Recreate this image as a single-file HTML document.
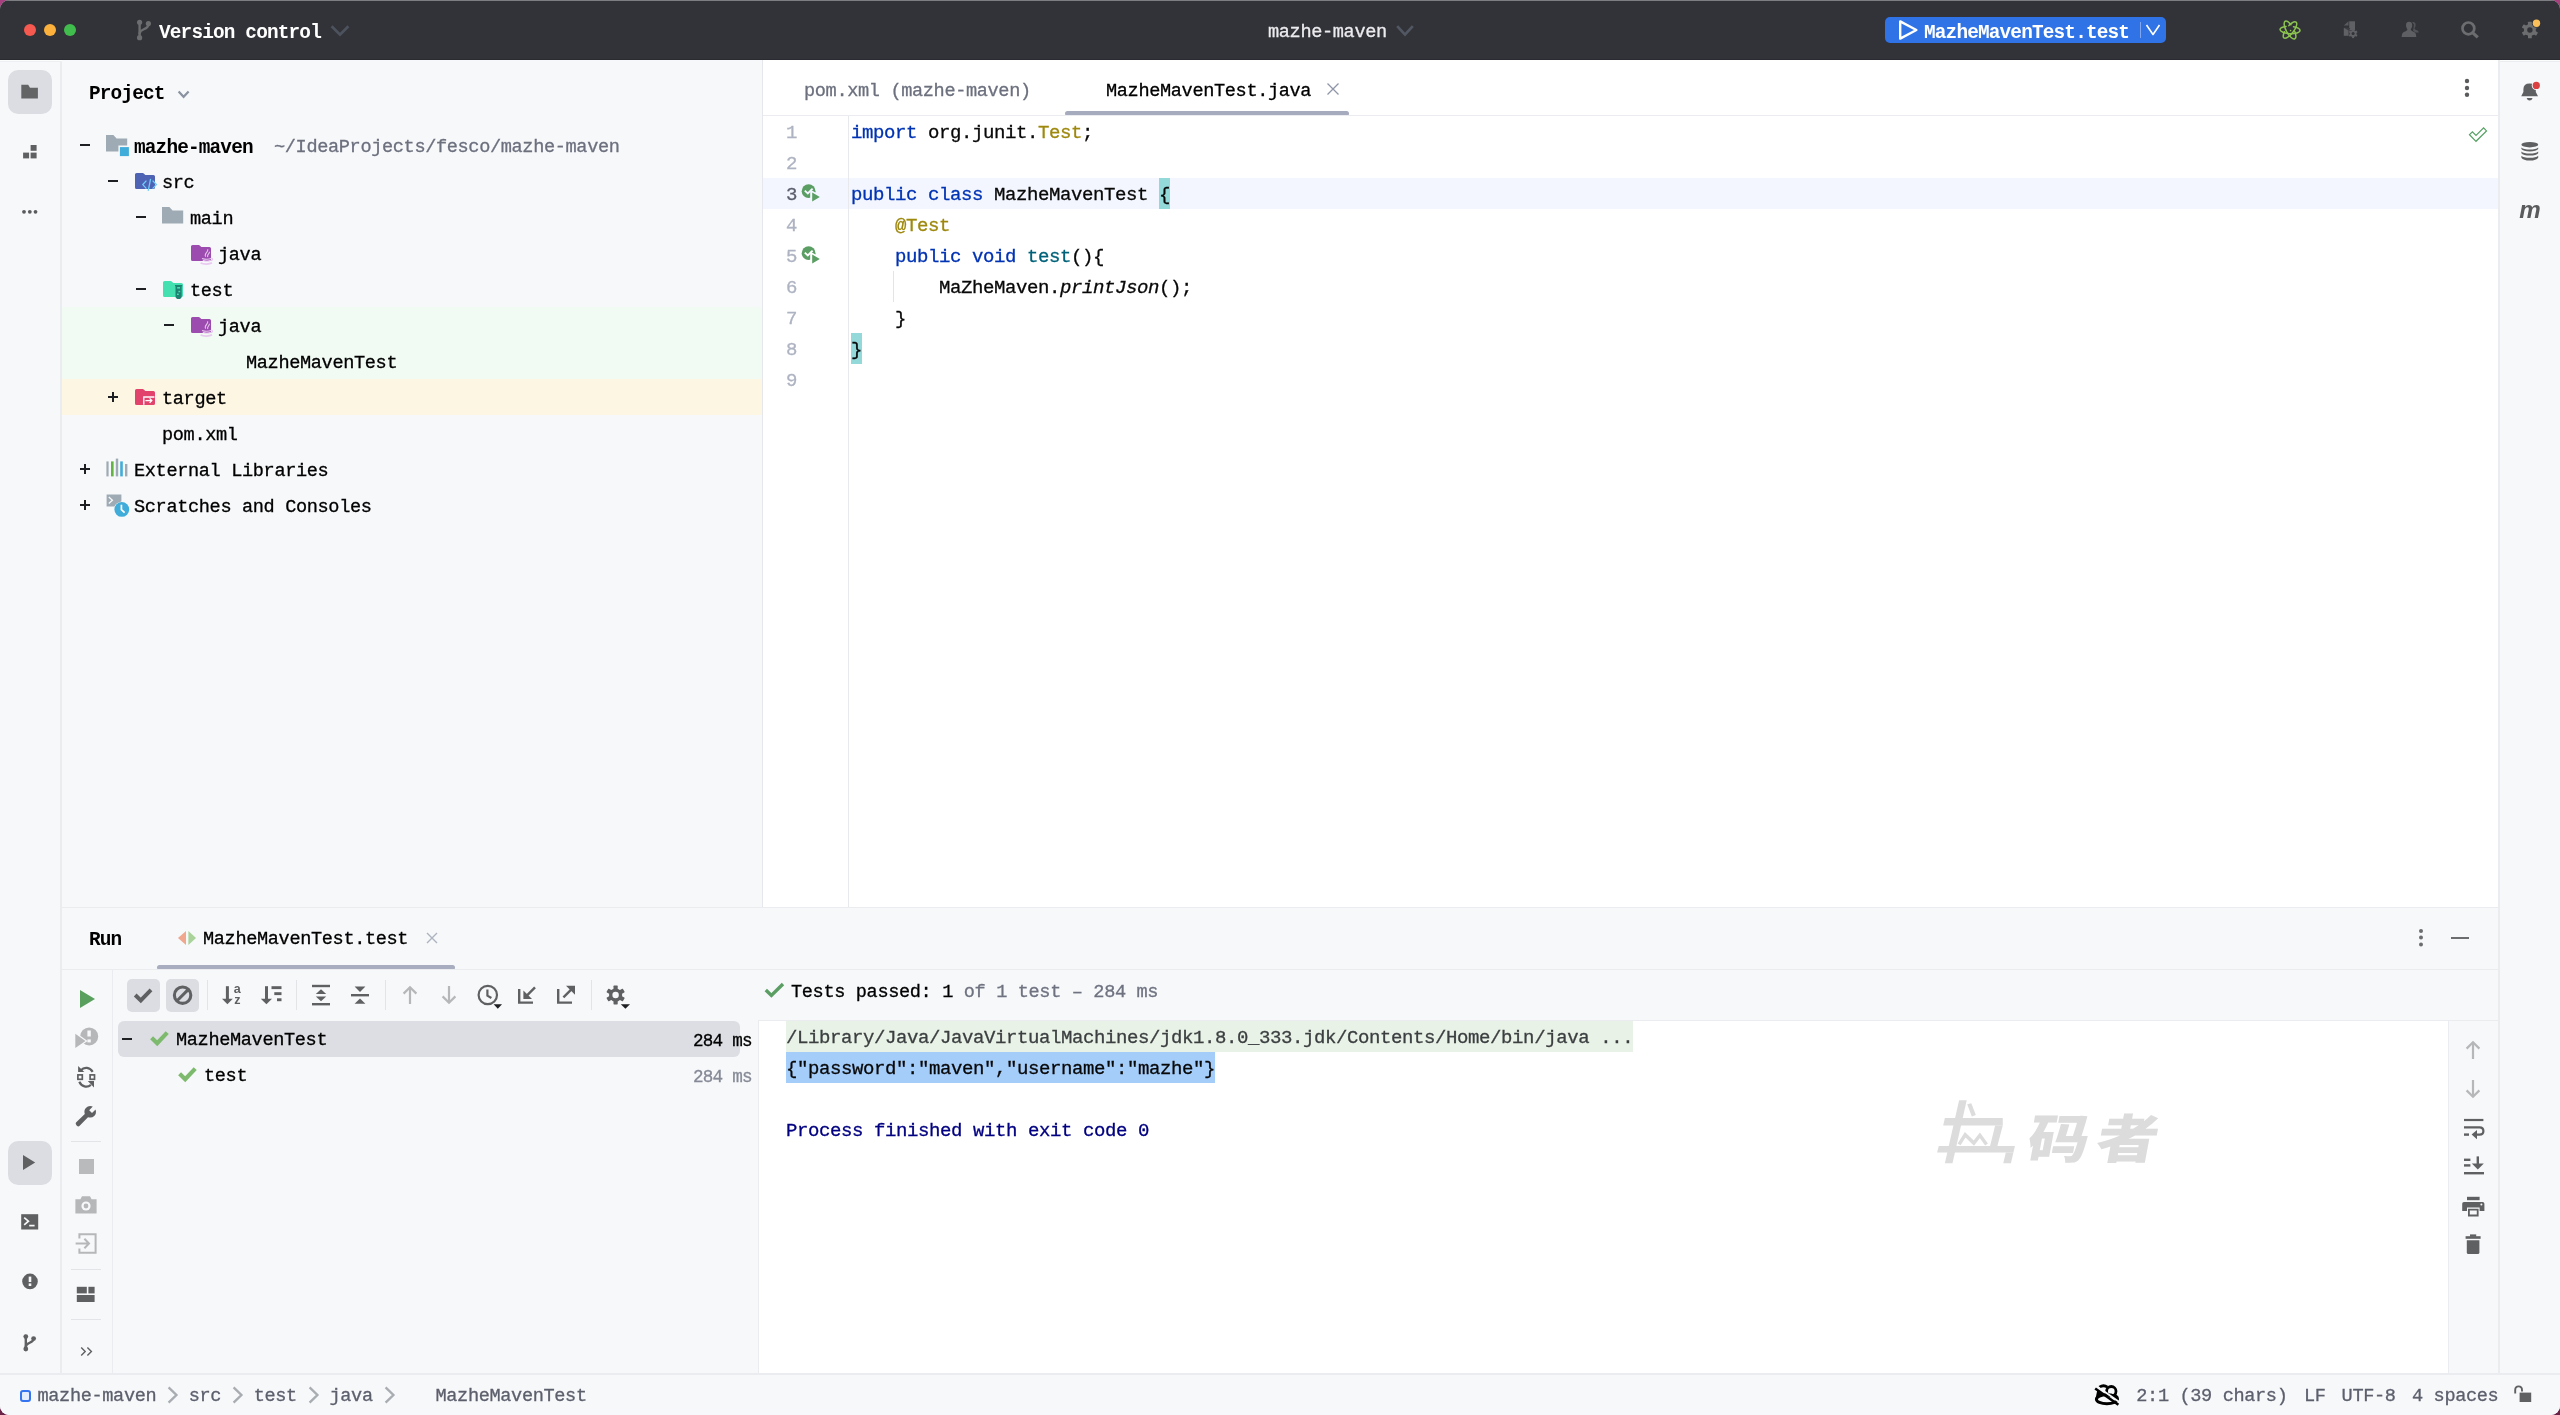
<!DOCTYPE html>
<html lang="en">
<head>
<meta charset="utf-8">
<title>mazhe-maven – MazheMavenTest.java</title>
<style>
html,body{margin:0;padding:0;}
body{width:2560px;height:1415px;overflow:hidden;background:linear-gradient(#a8407f,#6a2247);position:relative;
  font-family:"Liberation Mono","DejaVu Sans Mono",monospace;}
#win{position:absolute;left:0;top:0;width:2560px;height:1415px;border-radius:9px;overflow:hidden;background:#f7f8fa;will-change:transform;}
.abs{position:absolute;}
.t{position:absolute;white-space:pre;font-size:18.6px;letter-spacing:-0.36px;line-height:24px;height:24px;color:#000;margin-top:2px;-webkit-text-stroke:0.3px;}
.b{font-weight:bold;-webkit-text-stroke:0;font-size:19.4px;letter-spacing:-0.84px;}
.g{color:#6c707e;}
.c{position:absolute;white-space:pre;font-size:19px;letter-spacing:-0.4px;line-height:31px;height:31px;color:#080808;margin-top:2px;-webkit-text-stroke:0.3px;}
svg{position:absolute;overflow:visible;}
/* title bar */
#title{left:0;top:0;width:2560px;height:60px;background:#323338;}
#title .topline{left:0;top:0;width:2560px;height:1px;background:#7d7e82;}
.dot{position:absolute;top:24px;width:12px;height:12px;border-radius:50%;}
/* stripes */
#lstripe{left:0;top:60px;width:62px;height:1314px;background:#f7f8fa;box-shadow:inset -2px 0 0 #ebecf0;}
#rstripe{left:2498px;top:60px;width:62px;height:1314px;background:#f7f8fa;}
.sel{position:absolute;width:44px;height:44px;border-radius:10px;background:#dbdde2;}
/* project */
#proj{left:62px;top:60px;width:700px;height:848px;background:#f7f8fa;}
.row{position:absolute;left:0;width:700px;height:36px;}
/* editor */
#editor{left:762px;top:60px;width:1736px;height:848px;background:#fff;}
/* bottom */
#bottom{left:62px;top:908px;width:2436px;height:466px;background:#f7f8fa;}
/* status */
#status{left:0;top:1374px;width:2560px;height:41px;background:#f7f8fa;}
</style>
</head>
<body>
<div id="win">

<!-- ================= TITLE BAR ================= -->
<div id="title" class="abs">
  <div class="topline abs"></div>
  <div class="abs" style="left:0;top:58.6px;width:2560px;height:1.4px;background:#2a2b30"></div>
  <div class="dot" style="left:24px;background:#f6594f"></div>
  <div class="dot" style="left:44px;background:#fbb13c"></div>
  <div class="dot" style="left:64px;background:#41bd4e"></div>
  <!-- branch icon -->
  <svg style="left:135px;top:18px" width="20" height="24" viewBox="0 0 20 24"><g fill="none" stroke="#6c6d6f" stroke-width="2.4" stroke-linecap="round"><path d="M4.6 4.5V19.5"/><path d="M13.4 6.5C13.4 12 4.6 10.5 4.6 15.5"/></g><g fill="#6c6d6f"><circle cx="4.6" cy="4.3" r="2.6"/><circle cx="4.6" cy="19.7" r="2.6"/><circle cx="13.4" cy="5.6" r="2.6"/></g></svg>
  <div class="t b" style="left:159px;top:19px;color:#fff">Version control</div>
  <svg style="left:330px;top:24px" width="20" height="13" viewBox="0 0 20 13"><path d="M1.6 2.2L10 10.6L18.4 2.2" fill="none" stroke="#4d535e" stroke-width="2.7"/></svg>
  <div class="t" style="left:1268px;top:19px;color:#ececef">mazhe-maven</div>
  <svg style="left:1396px;top:24px" width="18" height="13" viewBox="0 0 18 13"><path d="M1.2 2.2L9 10.6L16.8 2.2" fill="none" stroke="#525863" stroke-width="2.7"/></svg>
  <!-- run widget -->
  <div class="abs" style="left:1885px;top:17px;width:281px;height:26px;border-radius:5px;background:#3073e6"></div>
  <svg style="left:1897px;top:19px" width="22" height="22" viewBox="0 0 22 22"><path d="M3.2 2.4L19.4 11L3.2 19.6Z" fill="none" stroke="#fff" stroke-width="2.4" stroke-linejoin="round"/></svg>
  <div class="t b" style="left:1924px;top:19px;color:#fff">MazheMavenTest.test</div>
  <div class="abs" style="left:2140px;top:22px;width:1px;height:16px;background:#7fa6f0"></div>
  <svg style="left:2145px;top:23px" width="16" height="14" viewBox="0 0 16 14"><path d="M1.5 2L8 11.5L14.5 2" fill="none" stroke="#fff" stroke-width="1.6" stroke-linejoin="round"/></svg>
  <!-- atom icon -->
  <svg style="left:2279px;top:20px" width="22" height="20" viewBox="0 0 22 20"><g fill="none" stroke="#8dc451" stroke-width="1.5" stroke-linecap="round"><ellipse cx="11" cy="10" rx="10" ry="3.7" transform="rotate(2.6 11 10)" stroke-dasharray="38 7.3" stroke-dashoffset="-37"/><ellipse cx="11" cy="10" rx="10" ry="3.7" transform="rotate(61 11 10)" stroke-dasharray="38 7.3" stroke-dashoffset="-37"/><ellipse cx="11" cy="10" rx="10" ry="3.7" transform="rotate(127.5 11 10)" stroke-dasharray="38 7.3" stroke-dashoffset="-14"/></g><circle cx="11" cy="10" r="2.4" fill="#323338"/><circle cx="11.6" cy="10.6" r=".8" fill="#8dc451"/></svg>
  <!-- file gear icon -->
  <svg style="left:2342px;top:21px" width="17" height="18" viewBox="0 0 17 18"><g fill="#606165"><path d="M7.2 0.3H13V9.4H7.2Z"/><path d="M1.8 4.6L6.5 0.3V4.6Z" opacity=".85"/><path d="M1.8 6.9H6.6V14.8H1.8Z"/><path d="M2.2 6.9H8.4L6.6 9.6Z" fill="#3c3d42"/></g><g transform="translate(11.1 12.6)"><g fill="#606165"><circle r="3.4"/><rect x="-1" y="-4.5" width="2" height="9"/><rect x="-1" y="-4.5" width="2" height="9" transform="rotate(60)"/><rect x="-1" y="-4.5" width="2" height="9" transform="rotate(120)"/></g><circle r="1.5" fill="#323338"/></g></svg>
  <!-- people icon -->
  <svg style="left:2401px;top:21px" width="19" height="17" viewBox="0 0 19 17"><g fill="#5e5f63"><path d="M11.2 1.2C13.2 0.6 14.8 2 14.6 4.2C14.5 5.6 13.9 6.6 13.4 7.3C13.4 8.6 15.5 9.2 17 9.8L17.8 11.4H14.2L12 9.6L12.6 7L12.9 3.4Z" opacity=".75"/><path d="M5 4.2C5 1.8 6.5 0.8 8.1 0.8C9.8 0.8 11.2 1.8 11.2 4.2C11.2 6 10.5 7.3 9.8 8.2C9.8 10.4 13.6 10.2 14.8 12.8L15.3 16H0.6L1.2 12.8C2.4 10.2 6.4 10.4 6.4 8.2C5.7 7.3 5 6 5 4.2Z"/></g></svg>
  <!-- search -->
  <svg style="left:2458px;top:18px" width="24" height="24" viewBox="0 0 24 24"><g fill="none" stroke="#6c6d6f"><circle cx="10.4" cy="10.4" r="5.9" stroke-width="2.7"/><path d="M14.8 14.8L19.8 19.4" stroke-width="3.1"/></g></svg>
  <!-- gear with dot -->
  <svg style="left:2518px;top:18px" width="26" height="26" viewBox="0 0 26 26"><g transform="translate(11.9 12)"><g fill="#6c6d6f"><circle r="6"/><rect x="-1.9" y="-8.3" width="3.8" height="16.6" rx=".6"/><rect x="-1.9" y="-8.3" width="3.8" height="16.6" rx=".6" transform="rotate(60)"/><rect x="-1.9" y="-8.3" width="3.8" height="16.6" rx=".6" transform="rotate(120)"/></g><circle r="2.7" fill="#323338"/></g><circle cx="18.5" cy="5.3" r="4.5" fill="#323338"/><circle cx="18.5" cy="5.3" r="3.7" fill="#fbbf5a"/></svg>
</div>

<!-- ================= LEFT STRIPE ================= -->
<div id="lstripe" class="abs">
  <div class="abs" style="left:0;top:0;width:762px;height:1px;background:#fcfcfd"></div>
  <div class="abs" style="left:0;top:1px;width:62px;height:1px;background:#eeeff2"></div>
  <div class="sel" style="left:8px;top:10px"></div>
  <svg style="left:21px;top:24px" width="18" height="16" viewBox="0 0 18 16"><path d="M0.3 0.8H7.2L9 3.8H16.9V14.6H0.3Z" fill="#636466"/></svg>
  <svg style="left:22px;top:84px" width="16" height="16" viewBox="0 0 16 16"><g fill="#5f6062"><rect x="8.6" y="1" width="6" height="5.8"/><rect x="1.1" y="8.6" width="6" height="5.8"/><rect x="8.6" y="8.6" width="6" height="5.8"/></g></svg>
  <svg style="left:20px;top:146px" width="20" height="12" viewBox="0 0 20 12"><g fill="#5a5b5d"><circle cx="4" cy="5.8" r="1.9"/><circle cx="9.8" cy="5.8" r="1.9"/><circle cx="15.5" cy="5.8" r="1.9"/></g></svg>
  <div class="sel" style="left:8px;top:1081px"></div>
  <svg style="left:22px;top:1094px" width="16" height="18" viewBox="0 0 16 18"><path d="M1 1L13.2 8.5L1 16Z" fill="#5f6062"/></svg>
  <svg style="left:21px;top:1154px" width="18" height="16" viewBox="0 0 18 16"><rect x="0.2" y="0.2" width="17" height="15.3" fill="#5f6062"/><path d="M3.2 3.6L7.4 7.2L3.2 10.8" fill="none" stroke="#f7f8fa" stroke-width="1.7"/><path d="M8.2 11.6H13.6" stroke="#f7f8fa" stroke-width="1.7"/></svg>
  <svg style="left:22px;top:1213px" width="16" height="16" viewBox="0 0 16 16"><circle cx="8" cy="8.4" r="7.8" fill="#5f6062"/><rect x="6.7" y="3.6" width="2.6" height="5.4" fill="#f7f8fa"/><rect x="6.7" y="10.4" width="2.6" height="2.6" fill="#f7f8fa"/></svg>
  <svg style="left:21px;top:1273px" width="18" height="20" viewBox="0 0 18 20"><g fill="none" stroke="#5f6062" stroke-width="2.4" stroke-linecap="round"><path d="M4.8 3V16"/><path d="M12.6 5.5C12.6 10.5 4.8 9 4.8 14"/></g><g fill="#5f6062"><circle cx="4.8" cy="3.6" r="2.4"/><circle cx="4.8" cy="16" r="2.4"/><circle cx="12.6" cy="5.6" r="2.4"/></g></svg>
</div>

<!-- ================= PROJECT PANEL ================= -->
<div id="proj" class="abs">
<!--PROJ-START-->
  <div class="t b" style="left:27px;top:20px">Project</div>
  <svg style="left:114px;top:30px" width="14" height="10" viewBox="0 0 14 10"><path d="M2.6 1.6L7.6 6.8L12.6 1.6" fill="none" stroke="#8a93a0" stroke-width="2.2"/></svg>
  <div class="abs" style="left:0;top:247px;width:700px;height:72px;background:#f1faf3"></div>
  <div class="abs" style="left:0;top:319px;width:700px;height:36px;background:#fdf6e2"></div>
  <div class="abs" style="left:18px;top:84px;width:10px;height:2px;background:#1e1f22"></div>
  <svg style="left:44px;top:75px" width="24" height="22" viewBox="0 0 24 22"><path d="M0 0H7.4L10.6 3.4H21.2V10.6H12.4V16.4H0Z" fill="#9eabb4"/><rect x="13.9" y="12.1" width="9" height="9" fill="#40acd9"/></svg>
  <div class="t b" style="left:72px;top:74px">mazhe-maven</div>
  <div class="t g" style="left:212px;top:74px">~/IdeaProjects/fesco/mazhe-maven</div>
  <div class="abs" style="left:46px;top:120px;width:10px;height:2px;background:#1e1f22"></div>
  <svg style="left:73px;top:113px" width="24" height="20" viewBox="0 0 24 20"><path d="M0 1.6Q0 0 1.6 0H7.6Q8.3 0 8.8 .5L10.3 2H18.4Q20 2 20 3.6V14.4Q20 16 18.4 16H1.6Q0 16 0 14.4Z" fill="#4e63b3"/><g fill="none" stroke="#6fccfb" stroke-width="1.3"><path d="M11.4 7.6L7.8 11.6L11.4 15.6"/><path d="M15.6 5.8L13.2 17.8"/><path d="M17.6 7.6L21.4 11.6L17.6 15.6"/></g></svg>
  <div class="t" style="left:100px;top:110px">src</div>
  <div class="abs" style="left:74px;top:156px;width:10px;height:2px;background:#1e1f22"></div>
  <svg style="left:100px;top:147px" width="24" height="20" viewBox="0 0 24 20"><path d="M0 0H7.4L10.6 3.4H21.2V16.4H0Z" fill="#9eabb4"/></svg>
  <div class="t" style="left:128px;top:146px">main</div>
  <svg style="left:129px;top:185px" width="24" height="22" viewBox="0 0 24 22"><path d="M0 1.6Q0 0 1.6 0H7.6Q8.3 0 8.8 .5L10.3 2H18.4Q20 2 20 3.6V14.4Q20 16 18.4 16H1.6Q0 16 0 14.4Z" fill="#9b4cae"/><g fill="none" stroke="#e6c3ee" stroke-width="1.1"><path d="M16.6 4.2C18 6.6 12.6 8.4 14.6 11.6"/><path d="M18.3 6.8C19 8.6 15.6 9.6 16.8 12"/><path d="M11 13.4C14 14.4 18 14.4 20.4 13.2"/><path d="M11.8 15.2C14.4 16.2 17.4 16.2 19.8 15.2"/><path d="M9.6 18C12.6 19.4 18.4 19.4 21 17.8" stroke-width="1.8" stroke="#e9c9f0"/><path d="M20.4 13.2C22 13.2 22 15.4 20 15.6"/></g></svg>
  <div class="t" style="left:156px;top:182px">java</div>
  <div class="abs" style="left:74px;top:228px;width:10px;height:2px;background:#1e1f22"></div>
  <svg style="left:101px;top:221px" width="24" height="22" viewBox="0 0 24 22"><path d="M0 1.6Q0 0 1.6 0H7.6Q8.3 0 8.8 .5L10.3 2H18.4Q20 2 20 3.6V14.4Q20 16 18.4 16H1.6Q0 16 0 14.4Z" fill="#45e0b0"/><path d="M12 4H19.2V5.2H18.7V15.2Q18.7 18 15.6 18Q12.5 18 12.5 15.2V5.2H12Z" fill="#1e8273"/><g fill="#45e0b0"><rect x="14.2" y="6" width="2.8" height="1.6"/><rect x="15.4" y="9.8" width="1.8" height="1.4"/><rect x="14" y="12.6" width="1.8" height="1.4"/></g></svg>
  <div class="t" style="left:128px;top:218px">test</div>
  <div class="abs" style="left:102px;top:264px;width:10px;height:2px;background:#1e1f22"></div>
  <svg style="left:129px;top:257px" width="24" height="22" viewBox="0 0 24 22"><path d="M0 1.6Q0 0 1.6 0H7.6Q8.3 0 8.8 .5L10.3 2H18.4Q20 2 20 3.6V14.4Q20 16 18.4 16H1.6Q0 16 0 14.4Z" fill="#9b4cae"/><g fill="none" stroke="#e6c3ee" stroke-width="1.1"><path d="M16.6 4.2C18 6.6 12.6 8.4 14.6 11.6"/><path d="M18.3 6.8C19 8.6 15.6 9.6 16.8 12"/><path d="M11 13.4C14 14.4 18 14.4 20.4 13.2"/><path d="M11.8 15.2C14.4 16.2 17.4 16.2 19.8 15.2"/><path d="M9.6 18C12.6 19.4 18.4 19.4 21 17.8" stroke-width="1.8" stroke="#e9c9f0"/><path d="M20.4 13.2C22 13.2 22 15.4 20 15.6"/></g></svg>
  <div class="t" style="left:156px;top:254px">java</div>
  <div class="t" style="left:184px;top:290px">MazheMavenTest</div>
  <div class="abs" style="left:46px;top:336px;width:10px;height:2px;background:#1e1f22"></div>
  <div class="abs" style="left:50px;top:332px;width:2px;height:10px;background:#1e1f22"></div>
  <svg style="left:73px;top:329px" width="24" height="20" viewBox="0 0 24 20"><path d="M0 1.6Q0 0 1.6 0H7.6Q8.3 0 8.8 .5L10.3 2H18.4Q20 2 20 3.6V14.4Q20 16 18.4 16H1.6Q0 16 0 14.4Z" fill="#e2436d"/><g fill="none" stroke="#fff" stroke-width="1.3"><path d="M8.8 15.8V8H19.4"/><path d="M10.4 11.6H16.6"/><path d="M14.6 9.4L16.8 11.6L14.6 13.8"/></g></svg>
  <div class="t" style="left:100px;top:326px">target</div>
  <div class="t" style="left:100px;top:362px">pom.xml</div>
  <div class="abs" style="left:18px;top:408px;width:10px;height:2px;background:#1e1f22"></div>
  <div class="abs" style="left:22px;top:404px;width:2px;height:10px;background:#1e1f22"></div>
  <svg style="left:44px;top:398px" width="24" height="20" viewBox="0 0 24 20"><g><rect x="0.4" y="3.4" width="2.2" height="15" fill="#9eabb4"/><rect x="5" y="3.4" width="2.6" height="15" fill="#62b543"/><rect x="9.8" y="0.6" width="2.4" height="17.8" fill="#9eabb4"/><rect x="14.2" y="3.4" width="2.6" height="15" fill="#40acd9"/><rect x="19" y="6" width="2.4" height="12.4" fill="#9eabb4"/></g></svg>
  <div class="t" style="left:72px;top:398px">External Libraries</div>
  <div class="abs" style="left:18px;top:444px;width:10px;height:2px;background:#1e1f22"></div>
  <div class="abs" style="left:22px;top:440px;width:2px;height:10px;background:#1e1f22"></div>
  <svg style="left:44px;top:434px" width="26" height="26" viewBox="0 0 26 26"><path d="M0.6 0.4H15.4V7.6Q10.4 8.6 8.4 12.4H0.6Z" fill="#9eabb4"/><path d="M2.8 3L6.4 6.2L2.8 9.4" fill="none" stroke="#f7f8fa" stroke-width="1.3"/><circle cx="15.8" cy="15.4" r="7.4" fill="#40acd9"/><path d="M15.4 10.8V15.6L18.6 18.6" fill="none" stroke="#fff" stroke-width="1.7"/></svg>
  <div class="t" style="left:72px;top:434px">Scratches and Consoles</div>
<!--PROJ-END-->
</div>

<!-- ================= EDITOR ================= -->
<div id="editor" class="abs">
<!--EDITOR-START-->
  <div class="t g" style="left:42px;top:18px">pom.xml (mazhe-maven)</div>
  <div class="t" style="left:344px;top:18px">MazheMavenTest.java</div>
  <svg style="left:564px;top:22px" width="14" height="14" viewBox="0 0 14 14"><path d="M1.5 1.5L12.5 12.5M12.5 1.5L1.5 12.5" stroke="#9096a9" stroke-width="1.3" fill="none"/></svg>
  <div class="abs" style="left:303px;top:51px;width:284px;height:5px;border-radius:2.5px;background:#a6abbd"></div>
  <div class="abs" style="left:0;top:55px;width:1736px;height:1px;background:#ebecf0"></div>
  <svg style="left:1701px;top:18px" width="8" height="22" viewBox="0 0 8 22"><g fill="#5a5b5d"><circle cx="4" cy="3" r="2.2"/><circle cx="4" cy="10" r="2.2"/><circle cx="4" cy="16.7" r="2.2"/></g></svg>
  <div class="abs" style="left:0;top:0;width:1.4px;height:848px;background:#e6e7ec"></div>
  <div class="abs" style="left:1px;top:118px;width:1735px;height:31px;background:#f3f6fe"></div>
  <div class="abs" style="left:86px;top:56px;width:1px;height:792px;background:#e8e9ed"></div>
  <div class="abs" style="left:131px;top:211px;width:1px;height:31px;background:#e4e4e6"></div>
  <div class="abs" style="left:397px;top:118px;width:11px;height:31px;background:#93d9d9"></div>
  <div class="abs" style="left:89px;top:273px;width:11px;height:31px;background:#93d9d9"></div>
  <div class="c" style="left:24px;top:56px;color:#aeb3c2">1</div>
  <div class="c" style="left:89px;top:56px"><span style="color:#0033b3">import</span> org.junit.<span style="color:#9e880d">Test</span>;</div>
  <div class="c" style="left:24px;top:87px;color:#aeb3c2">2</div>
  <div class="c" style="left:24px;top:118px;color:#5a5d6b">3</div>
  <div class="c" style="left:89px;top:118px"><span style="color:#0033b3">public</span> <span style="color:#0033b3">class</span> MazheMavenTest {</div>
  <div class="c" style="left:24px;top:149px;color:#aeb3c2">4</div>
  <div class="c" style="left:89px;top:149px">    <span style="color:#9e880d">@Test</span></div>
  <div class="c" style="left:24px;top:180px;color:#aeb3c2">5</div>
  <div class="c" style="left:89px;top:180px">    <span style="color:#0033b3">public</span> <span style="color:#0033b3">void</span> <span style="color:#00627a">test</span>(){</div>
  <div class="c" style="left:24px;top:211px;color:#aeb3c2">6</div>
  <div class="c" style="left:89px;top:211px">        MaZheMaven.<i>printJson</i>();</div>
  <div class="c" style="left:24px;top:242px;color:#aeb3c2">7</div>
  <div class="c" style="left:89px;top:242px">    }</div>
  <div class="c" style="left:24px;top:273px;color:#aeb3c2">8</div>
  <div class="c" style="left:89px;top:273px">}</div>
  <div class="c" style="left:24px;top:304px;color:#aeb3c2">9</div>
  <svg style="left:39px;top:124px" width="22" height="20" viewBox="0 0 22 20"><circle cx="7.6" cy="7.2" r="6.9" fill="#5a9e63"/><path d="M9.2 5.4L21 12.3L9.2 19.4Z" fill="#f3f6fe"/><path d="M11.2 8.6L18.8 12.9L11.2 17.4Z" fill="#5a9e63"/><path d="M3.8 6.6L6.8 9.4L11.6 4.6" fill="none" stroke="#f3f6fe" stroke-width="1.9"/></svg>
  <svg style="left:39px;top:186px" width="22" height="20" viewBox="0 0 22 20"><circle cx="7.6" cy="7.2" r="6.9" fill="#5a9e63"/><path d="M9.2 5.4L21 12.3L9.2 19.4Z" fill="#fff"/><path d="M11.2 8.6L18.8 12.9L11.2 17.4Z" fill="#5a9e63"/><path d="M3.8 6.6L6.8 9.4L11.6 4.6" fill="none" stroke="#fff" stroke-width="1.9"/></svg>
  <svg style="left:1704px;top:65px" width="24" height="20" viewBox="0 0 24 20"><path d="M3.5 9.7L6.4 6.8L10 10.4L17.6 2.8L20.5 5.9L10 16.3Z" fill="none" stroke="#55a063" stroke-width="1.2" stroke-linejoin="miter"/></svg>
<!--EDITOR-END-->
</div>

<!-- ================= RIGHT STRIPE ================= -->
<div id="rstripe" class="abs">
  <div class="abs" style="left:0;top:0;width:62px;height:1px;background:#fcfcfd"></div>
  <div class="abs" style="left:0;top:1px;width:62px;height:1px;background:#ebecf0"></div>
  <div class="abs" style="left:0;top:0;width:2px;height:1314px;background:#ebecf0"></div>
  <!-- bell -->
  <svg style="left:21px;top:21px" width="22" height="22" viewBox="0 0 22 22"><path d="M2.2 15.2L4.4 11V8.2Q4.4 2.6 10.6 2.6Q16.8 2.6 16.8 8.2V11L19 15.2Z" fill="#5f6062"/><path d="M7.6 17H13.6Q12.8 19.6 10.6 19.6Q8.4 19.6 7.6 17Z" fill="#5f6062"/><circle cx="17.3" cy="4.4" r="4.6" fill="#f7f8fa"/><circle cx="17.3" cy="4.4" r="3.6" fill="#db4141"/></svg>
  <!-- database -->
  <svg style="left:22px;top:81px" width="20" height="21" viewBox="0 0 20 21"><g fill="#5f6062"><ellipse cx="9.8" cy="3.7" rx="8.4" ry="2.7"/><path d="M1.4 6.4Q3.6 8.4 9.8 8.4Q16 8.4 18.2 6.4V8Q16.4 10.4 9.8 10.4Q3.2 10.4 1.4 8Z"/><path d="M1.4 10.6Q3.6 12.6 9.8 12.6Q16 12.6 18.2 10.6V12.2Q16.4 14.6 9.8 14.6Q3.2 14.6 1.4 12.2Z"/><path d="M1.4 14.8Q3.6 16.8 9.8 16.8Q16 16.8 18.2 14.8V16.8Q16.4 19.6 9.8 19.6Q3.2 19.6 1.4 16.8Z"/></g></svg>
  <!-- maven m -->
  <div class="abs" style="left:17px;top:134px;width:30px;height:32px;line-height:32px;font-family:'Liberation Sans',sans-serif;font-style:italic;font-weight:bold;font-size:23px;color:#5a5b5d;text-align:center;transform:scaleX(1.05)">m</div>
</div>

<!-- ================= BOTTOM RUN PANEL ================= -->
<div id="bottom" class="abs">
<!--BOTTOM-START-->
  <div class="abs" style="left:0px;top:-1px;width:2436px;height:1px;background:#ebecf0;"></div>
  <div class="t b" style="left:27px;top:18px;">Run</div>
  <svg style="left:116px;top:23px" width="18" height="14" viewBox="0 0 18 14"><path d="M8 0V14L0 7Z" fill="#f0a78d"/><path d="M10.4 0L18 7L10.4 14Z" fill="#a9d39a"/></svg>
  <div class="t" style="left:141px;top:18px;">MazheMavenTest.test</div>
  <svg style="left:364px;top:24px" width="12" height="12" viewBox="0 0 12 12"><path d="M1 1L11 11M11 1L1 11" stroke="#aeb3c0" stroke-width="1.4" fill="none"/></svg>
  <div class="abs" style="left:95px;top:57.4px;width:298px;height:4.6px;background:#a8aebf;border-radius:2.5px"></div>
  <div class="abs" style="left:0px;top:61px;width:2436px;height:1px;background:#ebecf0;"></div>
  <svg style="left:2355px;top:20px" width="8" height="20" viewBox="0 0 8 20"><g fill="#6c6d6f"><circle cx="4" cy="3" r="2"/><circle cx="4" cy="9.6" r="2"/><circle cx="4" cy="16.4" r="2"/></g></svg>
  <div class="abs" style="left:2389px;top:28.5px;width:18px;height:2px;background:#6c6d6f;"></div>
  <div class="abs" style="left:50px;top:62px;width:1px;height:404px;background:#ebecf0;"></div>
  <svg style="left:17px;top:80px" width="18" height="22" viewBox="0 0 18 22"><path d="M1 2L16 11L1 20Z" fill="#59a05f"/></svg>
  <svg style="left:12px;top:118px" width="26" height="24" viewBox="0 0 26 24"><circle cx="15.2" cy="10.4" r="9" fill="#b6b7b9"/><rect x="13.4" y="4.5" width="3.4" height="6" fill="#f7f8fa"/><rect x="13.4" y="13.4" width="3.4" height="3" fill="#f7f8fa"/><path d="M1.3 7.8L11.5 15L1.3 22Z" fill="#b6b7b9" stroke="#f7f8fa" stroke-width="2.4" paint-order="stroke"/></svg>
  <svg style="left:13px;top:157px" width="22" height="25" viewBox="0 0 22 25"><g fill="none" stroke="#5f6062" stroke-width="2.2"><path d="M17.7 6.9A8 9.5 0 0 0 5.7 5.4"/><path d="M4.3 16.7A8 9.5 0 0 0 15.9 19.8"/><rect x="2.9" y="9.9" width="4.4" height="4.4" stroke-width="1.7"/><rect x="15.1" y="9.9" width="4.4" height="4.4" stroke-width="1.7"/></g><path d="M3.1 1V6.9H9.3Z" fill="#5f6062"/><path d="M19 16.1V22.5L12.8 16.1Z" fill="#5f6062"/></svg>
  <svg style="left:13px;top:197px" width="22" height="22" viewBox="0 0 22 22"><path d="M20.6 4.4L17 8L14.2 5.2L17.8 1.6Q13.6 0.2 10.9 2.9Q8.6 5.4 9.8 9L1 17.6Q0 18.8 1.6 20.4Q3.2 22 4.4 21L13 12.2Q16.800000000000001 13.4 19.2 11Q21.8 8.400000000000001 20.6 4.4Z" fill="#5f6062"/></svg>
  <div class="abs" style="left:9px;top:233px;width:30px;height:1px;background:#e3e4e8;"></div>
  <div class="abs" style="left:16.5px;top:251px;width:15px;height:14.5px;background:#b9babc;"></div>
  <svg style="left:13px;top:287px" width="22" height="20" viewBox="0 0 22 20"><path d="M0.4 4.2H5.4L7 1.2H15L16.6 4.2H21.6V18.6H0.4Z" fill="#b6b7b9"/><circle cx="11" cy="11" r="4.6" fill="#f7f8fa"/><circle cx="11" cy="11" r="2.4" fill="#b6b7b9"/></svg>
  <svg style="left:13px;top:325px" width="22" height="21" viewBox="0 0 22 21"><g fill="none" stroke="#b6b7b9" stroke-width="2"><path d="M4.4 5.4V1.2H20.6V19.8H4.4V15.6"/><path d="M0.6 10.5H13.6M9.4 5.8L14 10.5L9.4 15.2"/></g></svg>
  <div class="abs" style="left:9px;top:361px;width:30px;height:1px;background:#e3e4e8;"></div>
  <svg style="left:14px;top:378px" width="20" height="17" viewBox="0 0 20 17"><g fill="#5f6062"><rect x="0.8" y="0.8" width="10" height="6.6"/><rect x="12.4" y="0.8" width="6.2" height="6.6"/><rect x="0.8" y="9" width="17.8" height="7"/></g></svg>
  <div class="abs" style="left:9px;top:411px;width:30px;height:1px;background:#e3e4e8;"></div>
  <svg style="left:18px;top:438px" width="14" height="11" viewBox="0 0 14 11"><path d="M1.2 1.4L5.2 5.4L1.2 9.4M7.4 1.4L11.4 5.4L7.4 9.4" fill="none" stroke="#5f6062" stroke-width="1.4"/></svg>
  <div class="abs" style="left:65px;top:71px;width:33px;height:33px;background:#dbdde2;border-radius:5px"></div>
  <div class="abs" style="left:104px;top:71px;width:33px;height:33px;background:#dbdde2;border-radius:5px"></div>
  <svg style="left:71px;top:77px" width="20" height="20" viewBox="0 0 20 20"><path d="M2.2 10L7.8 15.4L18 4.8" fill="none" stroke="#5f6062" stroke-width="3.9"/></svg>
  <svg style="left:110px;top:77px" width="22" height="22" viewBox="0 0 22 22"><g fill="none" stroke="#5f6062" stroke-width="3.1"><circle cx="10.6" cy="10.2" r="8.2"/><path d="M4.8 16L16.4 4.4"/></g></svg>
  <div class="abs" style="left:145px;top:72px;width:1px;height:30px;background:#e3e4e8;"></div>
  <div class="abs" style="left:234px;top:72px;width:1px;height:30px;background:#e3e4e8;"></div>
  <div class="abs" style="left:323px;top:72px;width:1px;height:30px;background:#e3e4e8;"></div>
  <div class="abs" style="left:529px;top:72px;width:1px;height:30px;background:#e3e4e8;"></div>
  <svg style="left:159px;top:76px" width="24" height="22" viewBox="0 0 24 22"><rect x="4.9" y="2.2" width="3" height="13.4" fill="#5f6062"/><path d="M1 14.8H11.8L6.4 20.3Z" fill="#5f6062"/><text x="12.8" y="8.9" style="font-family:'Liberation Sans',sans-serif;font-weight:bold;font-size:12.5px" fill="#5f6062">a</text><text x="13.2" y="19.7" style="font-family:'Liberation Sans',sans-serif;font-weight:bold;font-size:12.5px" fill="#5f6062">z</text></svg>
  <svg style="left:198px;top:76px" width="24" height="22" viewBox="0 0 24 22"><rect x="5" y="2.2" width="3" height="13.4" fill="#5f6062"/><path d="M0.8 14.8H12L6.4 20.3Z" fill="#5f6062"/><g fill="#5f6062"><rect x="11.5" y="2.2" width="10" height="2.9"/><rect x="14.3" y="8.2" width="7.2" height="2.9"/><rect x="17" y="14.3" width="4.5" height="2.9"/></g></svg>
  <svg style="left:249px;top:76px" width="20" height="23" viewBox="0 0 20 23"><g fill="#5f6062"><rect x="1" y="0.8" width="18" height="2.4"/><rect x="1" y="19" width="18" height="2.4"/><path d="M10 5.2L15.2 10H4.8Z"/><path d="M10 17.2L15.2 12.4H4.8Z"/></g></svg>
  <svg style="left:288px;top:76px" width="20" height="23" viewBox="0 0 20 23"><g fill="#5f6062"><rect x="1" y="10" width="18" height="2.4"/><path d="M10 8L15.4 2.6H4.6Z"/><path d="M10 14.4L15.4 19.8H4.6Z"/></g></svg>
  <svg style="left:340px;top:77px" width="16" height="20" viewBox="0 0 16 20"><g fill="none" stroke="#b6b7b9" stroke-width="2.2"><path d="M8 19V2.6"/><path d="M1.6 8.6L8 2.2L14.4 8.6"/></g></svg>
  <svg style="left:379px;top:77px" width="16" height="20" viewBox="0 0 16 20"><g fill="none" stroke="#b6b7b9" stroke-width="2.2"><path d="M8 1V17.4"/><path d="M1.6 11.4L8 17.8L14.4 11.4"/></g></svg>
  <svg style="left:414px;top:75px" width="28" height="28" viewBox="0 0 28 28"><g fill="none" stroke="#5f6062" stroke-width="2.2"><circle cx="11.8" cy="12" r="9.2"/><path d="M11.4 6.6V12.6L15.4 15"/></g><path d="M17.6 21.2H26L21.8 25.8Z" fill="#1e1f22"/></svg>
  <svg style="left:455px;top:77px" width="20" height="20" viewBox="0 0 20 20"><g fill="none" stroke="#5f6062" stroke-width="2.4"><path d="M2.2 4V17.6H16"/><path d="M18 2.4L8.6 11.8"/></g><path d="M6.4 5.4V14H15Z" fill="#5f6062"/></svg>
  <svg style="left:494px;top:77px" width="20" height="20" viewBox="0 0 20 20"><g fill="none" stroke="#5f6062" stroke-width="2.4"><path d="M2.2 4V17.6H16"/><path d="M7.4 12.4L16.4 3.4"/></g><path d="M10 0.8H19V9.8Z" fill="#5f6062"/></svg>
  <svg style="left:541px;top:75px" width="30" height="28" viewBox="0 0 30 28"><g transform="translate(12.6 12)"><g fill="#5f6062"><circle r="6.6"/><rect x="-2.1" y="-9.4" width="4.2" height="18.8" rx=".6"/><rect x="-2.1" y="-9.4" width="4.2" height="18.8" rx=".6" transform="rotate(60)"/><rect x="-2.1" y="-9.4" width="4.2" height="18.8" rx=".6" transform="rotate(120)"/></g><circle r="3.2" fill="#f7f8fa"/></g><path d="M17.8 21.2H27L22.4 25.8Z" fill="#1e1f22"/></svg>
  <div class="abs" style="left:56px;top:113px;width:622px;height:36px;background:#dcdee3;border-radius:6px"></div>
  <div class="abs" style="left:60px;top:130px;width:10.4px;height:2px;background:#1e1f22;"></div>
  <svg style="left:87px;top:121px" width="20" height="17" viewBox="0 0 20 17"><path d="M2.6 8.8L8.2 14.2L18.2 3.6" fill="none" stroke="#7dba6d" stroke-width="4.2"/></svg>
  <div class="t" style="left:114px;top:119px;">MazheMavenTest</div>
  <div class="t" style="left:631px;top:119px;font-size:17.6px;letter-spacing:-0.76px">284 ms</div>
  <svg style="left:115px;top:157px" width="20" height="17" viewBox="0 0 20 17"><path d="M2.6 8.8L8.2 14.2L18.2 3.6" fill="none" stroke="#7dba6d" stroke-width="4.2"/></svg>
  <div class="t" style="left:142px;top:155px;">test</div>
  <div class="t g" style="left:631px;top:155px;font-size:17.6px;letter-spacing:-0.76px;color:#868a96">284 ms</div>
  <svg style="left:702px;top:73px" width="22" height="18" viewBox="0 0 22 18"><path d="M1.8 9L7.4 14.4L19 3" fill="none" stroke="#5a9e63" stroke-width="3.4"/></svg>
  <div class="t" style="left:729px;top:71px;">Tests passed: 1<span style="color:#6f7380"> of 1 test – 284 ms</span></div>
  <div class="abs" style="left:696px;top:112px;width:1px;height:354px;background:#ebecf0;"></div>
  <div class="abs" style="left:697px;top:112px;width:1739px;height:1px;background:#ebecf0;"></div>
  <div class="abs" style="left:697px;top:113px;width:1689px;height:353px;background:#fff;"></div>
  <div class="abs" style="left:2386px;top:112px;width:1px;height:354px;background:#ebecf0;"></div>
  <div class="abs" style="left:724px;top:113px;width:847px;height:31px;background:#e8f2e6;"></div>
  <div class="abs" style="left:724px;top:144px;width:429px;height:31px;background:#a4cdfa;"></div>
  <div class="c" style="left:724px;top:113px;color:#3c3f41">/Library/Java/JavaVirtualMachines/jdk1.8.0_333.jdk/Contents/Home/bin/java ...</div>
  <div class="c" style="left:724px;top:144px;">{"password":"maven","username":"mazhe"}</div>
  <div class="c" style="left:724px;top:206px;color:#000080">Process finished with exit code 0</div>
  <div class="abs" id="wm" style="left:1960px;top:201px;width:140px;height:64px;color:#dcdcdc;font-family:'Liberation Sans','Noto Sans CJK SC',sans-serif;font-weight:900;font-size:51px;line-height:64px;white-space:pre;letter-spacing:6px;transform-origin:0 100%;transform:scale(1.21,1.02) skewX(-9deg)">码者</div>
  <svg style="left:1858px;top:177px" width="101.56" height="94.96" viewBox="0 0 1000 935"><g fill="#dcdcdc"><path d="M385 150H460L320 770H245Z"/><path d="M465 190L505 180L550 295L510 310Z"/><path d="M245 325H815V400H228Z"/><path d="M740 400H815L762 600H690Z"/><path d="M185 600H935L920 665H168Z"/><path d="M845 665H920L895 770H820Z"/></g><path d="M385 585L445 490L530 572L590 495L655 585" fill="none" stroke="#dcdcdc" stroke-width="34"/></svg>
  <svg style="left:2403px;top:132px" width="16" height="20" viewBox="0 0 16 20"><g fill="none" stroke="#b6b7b9" stroke-width="2.2"><path d="M8 19V2.6"/><path d="M1.6 8.6L8 2.2L14.4 8.6"/></g></svg>
  <svg style="left:2403px;top:171px" width="16" height="20" viewBox="0 0 16 20"><g fill="none" stroke="#b6b7b9" stroke-width="2.2"><path d="M8 1V17.4"/><path d="M1.6 11.4L8 17.8L14.4 11.4"/></g></svg>
  <svg style="left:2401px;top:210px" width="22" height="22" viewBox="0 0 22 22"><g fill="none" stroke="#5f6062" stroke-width="2.2"><path d="M1 2H20.4"/><path d="M1 9.4H16.6Q20.4 9.4 20.4 13Q20.4 16.6 16.6 16.6H12"/></g><path d="M14 12V21.2L8.6 16.6Z" fill="#5f6062"/><rect x="1" y="15.4" width="5" height="2.4" fill="#5f6062"/></svg>
  <svg style="left:2401px;top:248px" width="22" height="20" viewBox="0 0 22 20"><g fill="#5f6062"><rect x="1" y="2.6" width="6.4" height="2.4"/><rect x="1" y="8.2" width="6.4" height="2.4"/><rect x="1" y="16" width="20" height="2.4"/><rect x="13.6" y="0.4" width="2.4" height="9"/><path d="M8.8 7.4H20.8L14.8 13.6Z"/></g></svg>
  <svg style="left:2400px;top:288px" width="23" height="21" viewBox="0 0 23 21"><g fill="#5f6062"><rect x="5" y="0.8" width="12.6" height="3.4"/><path d="M2 6H20.6Q22.4 6 22.4 7.8V15H17.6V11.6H5V15H0.2V7.8Q0.2 6 2 6Z"/><path d="M6 12.8H16.600000000000001V20.4H6ZM7.8 14.6V18.6H14.8V14.6Z" fill-rule="evenodd"/></g><circle cx="19.4" cy="8.6" r="1" fill="#f7f8fa"/></svg>
  <svg style="left:2403px;top:326px" width="16" height="21" viewBox="0 0 16 21"><g fill="#5f6062"><rect x="0.6" y="2.2" width="15" height="2.6"/><rect x="5" y="0.4" width="6.2" height="2.4"/><path d="M1.8 6.2H14.4V18.4Q14.4 20 12.8 20H3.4Q1.8 20 1.8 18.4Z"/></g></svg>
<!--BOTTOM-END-->
</div>

<!-- ================= STATUS BAR ================= -->
<div id="status" class="abs">
<!--STATUS-START-->
  <div class="abs" style="left:0px;top:-1px;width:2560px;height:2px;background:#ebecf0;"></div>
  <div class="abs" style="left:19.5px;top:16px;width:11.5px;height:12px;box-sizing:border-box;border:2.2px solid #3574f0;border-radius:3px;background:#e4edfd"></div>
  <div class="t" style="left:37.5px;top:9px;color:#5c5f6c">mazhe-maven</div>
  <div class="t" style="left:188.7px;top:9px;color:#5c5f6c">src</div>
  <div class="t" style="left:253.7px;top:9px;color:#5c5f6c">test</div>
  <div class="t" style="left:329.5px;top:9px;color:#5c5f6c">java</div>
  <div class="t" style="left:435.5px;top:9px;color:#5c5f6c">MazheMavenTest</div>
  <svg style="left:167px;top:12px" width="12" height="18" viewBox="0 0 12 18"><path d="M1.6 1.4L9.4 9L1.6 16.6" fill="none" stroke="#a9adb2" stroke-width="2.4"/></svg>
  <svg style="left:232px;top:12px" width="12" height="18" viewBox="0 0 12 18"><path d="M1.6 1.4L9.4 9L1.6 16.6" fill="none" stroke="#a9adb2" stroke-width="2.4"/></svg>
  <svg style="left:308px;top:12px" width="12" height="18" viewBox="0 0 12 18"><path d="M1.6 1.4L9.4 9L1.6 16.6" fill="none" stroke="#a9adb2" stroke-width="2.4"/></svg>
  <svg style="left:384px;top:12px" width="12" height="18" viewBox="0 0 12 18"><path d="M1.6 1.4L9.4 9L1.6 16.6" fill="none" stroke="#a9adb2" stroke-width="2.4"/></svg>
  <svg style="left:2094px;top:10px" width="26" height="24" viewBox="0 0 26 24"><g fill="none" stroke="#000" stroke-width="3"><ellipse cx="12.9" cy="15.3" rx="10.5" ry="4.5"/><path d="M5.4 3.2Q9.6 0.4 13.4 3.2" stroke-width="2.8"/><circle cx="17.3" cy="7.2" r="4.7" stroke-width="2.8"/></g><path d="M21.2 9.4L24.4 12.6L24.8 16.6L20 13.4Z" fill="#000"/><path d="M3.2 6.4L10.4 11.8L4.4 12.2L1.6 14.4Z" fill="#000"/><path d="M4.6 3.4L26 18.4" stroke="#f7f8fa" stroke-width="1.8" fill="none"/><path d="M1.2 4.4L24.4 20.8" stroke="#000" stroke-width="2.5" fill="none"/></svg>
  <div class="t" style="left:2136.3px;top:9px;color:#5c5f6c">2:1 (39 chars)</div>
  <div class="t" style="left:2304px;top:9px;color:#5c5f6c">LF</div>
  <div class="t" style="left:2341.6px;top:9px;color:#5c5f6c">UTF-8</div>
  <div class="t" style="left:2412px;top:9px;color:#5c5f6c">4 spaces</div>
  <svg style="left:2513px;top:11px" width="20" height="18" viewBox="0 0 20 18"><path d="M2.2 8.4V5Q2.2 1.4 5.6 1.4Q9 1.4 9 5V6.4" fill="none" stroke="#5f6062" stroke-width="1.9"/><rect x="6.6" y="7.6" width="11.6" height="9.4" fill="#5f6062"/></svg>
<!--STATUS-END-->
</div>

</div>
</body>
</html>
